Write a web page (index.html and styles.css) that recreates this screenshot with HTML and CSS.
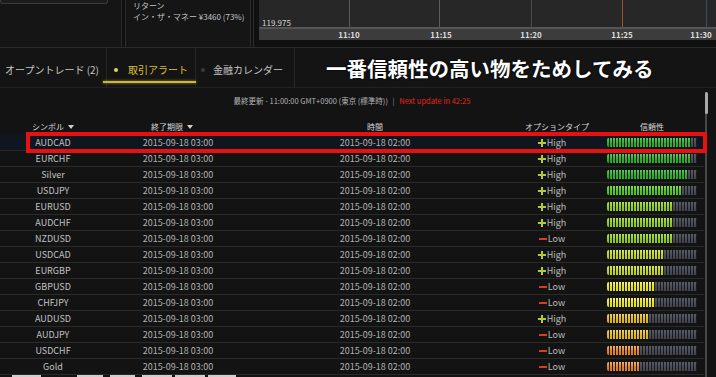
FILE: index.html
```html
<!DOCTYPE html>
<html lang="ja">
<head>
<meta charset="utf-8">
<title>取引アラート</title>
<link rel="stylesheet" href="styles.css">
</head>
<body>
<div class="page">
  <header class="top">
    <div class="acct"><div class="acct-box"></div></div>
    <div class="vsep"></div>
    <div class="info">
      <div class="info-line">リターン</div>
      <div class="info-line">イン・ザ・マネー ¥3460 (73%)</div>
    </div>
    <div class="vsep narrow"></div>
    <div class="chart-col">
      <div class="chart">
        <div class="plot">
          <span class="grid" style="left:90px"></span>
          <span class="grid" style="left:180px"></span>
          <span class="grid dim" style="left:272px"></span>
          <span class="grid orange" style="left:363px"></span>
          <span class="grid blue" style="left:447px"></span>
          <span class="price">119.975</span>
        </div>
        <div class="axis">
          <span class="tick" style="left:90px">11:10</span>
          <span class="tick" style="left:182px">11:15</span>
          <span class="tick" style="left:272px">11:20</span>
          <span class="tick" style="left:363px">11:25</span>
          <span class="tick" style="left:442px">11:30</span>
        </div>
      </div>
    </div>
  </header>

  <nav class="tabs">
    <div class="tab first">オープントレード (2)</div>
    <div class="tab active"><span class="dot"></span>取引アラート</div>
    <div class="tab third"><span class="dot"></span>金融カレンダー</div>
    <div class="headline">一番信頼性の高い物をためしてみる</div>
  </nav>

  <main class="content">
    <div class="list">
      <div class="stamp">最終更新 - 11:00:00 GMT+0900 (東京 (標準時)) <span class="pipe">|</span> <span class="next">Next update in 42:25</span></div>

      <div class="row head">
        <span class="sort">シンボル</span>
        <span class="sort h-date">終了期限</span>
        <span>時間</span>
        <span class="h-opt">オプションタイプ</span>
        <span>信頼性</span>
      </div>

      <div class="row sel"><span class="sym">AUDCAD</span><span class="dt">2015-09-18 03:00</span><span class="dt">2015-09-18 02:00</span><span class="opt"><i class="plus"></i>High</span><span class="bar c1"><span class="fill" style="--n:28"></span><span class="rest"></span></span></div>
      <div class="row"><span class="sym">EURCHF</span><span class="dt">2015-09-18 03:00</span><span class="dt">2015-09-18 02:00</span><span class="opt"><i class="plus"></i>High</span><span class="bar c1"><span class="fill" style="--n:28"></span><span class="rest"></span></span></div>
      <div class="row"><span class="sym">Silver</span><span class="dt">2015-09-18 03:00</span><span class="dt">2015-09-18 02:00</span><span class="opt"><i class="plus"></i>High</span><span class="bar c1"><span class="fill" style="--n:27"></span><span class="rest"></span></span></div>
      <div class="row"><span class="sym">USDJPY</span><span class="dt">2015-09-18 03:00</span><span class="dt">2015-09-18 02:00</span><span class="opt"><i class="plus"></i>High</span><span class="bar c2"><span class="fill" style="--n:25"></span><span class="rest"></span></span></div>
      <div class="row"><span class="sym">EURUSD</span><span class="dt">2015-09-18 03:00</span><span class="dt">2015-09-18 02:00</span><span class="opt"><i class="plus"></i>High</span><span class="bar c3"><span class="fill" style="--n:22"></span><span class="rest"></span></span></div>
      <div class="row"><span class="sym">AUDCHF</span><span class="dt">2015-09-18 03:00</span><span class="dt">2015-09-18 02:00</span><span class="opt"><i class="plus"></i>High</span><span class="bar c3"><span class="fill" style="--n:22"></span><span class="rest"></span></span></div>
      <div class="row"><span class="sym">NZDUSD</span><span class="dt">2015-09-18 03:00</span><span class="dt">2015-09-18 02:00</span><span class="opt"><i class="minus"></i>Low</span><span class="bar c3"><span class="fill" style="--n:22"></span><span class="rest"></span></span></div>
      <div class="row"><span class="sym">USDCAD</span><span class="dt">2015-09-18 03:00</span><span class="dt">2015-09-18 02:00</span><span class="opt"><i class="plus"></i>High</span><span class="bar c4"><span class="fill" style="--n:19"></span><span class="rest"></span></span></div>
      <div class="row"><span class="sym">EURGBP</span><span class="dt">2015-09-18 03:00</span><span class="dt">2015-09-18 02:00</span><span class="opt"><i class="plus"></i>High</span><span class="bar c4"><span class="fill" style="--n:19"></span><span class="rest"></span></span></div>
      <div class="row"><span class="sym">GBPUSD</span><span class="dt">2015-09-18 03:00</span><span class="dt">2015-09-18 02:00</span><span class="opt"><i class="minus"></i>Low</span><span class="bar c5"><span class="fill" style="--n:16"></span><span class="rest"></span></span></div>
      <div class="row"><span class="sym">CHFJPY</span><span class="dt">2015-09-18 03:00</span><span class="dt">2015-09-18 02:00</span><span class="opt"><i class="minus"></i>Low</span><span class="bar c5"><span class="fill" style="--n:16"></span><span class="rest"></span></span></div>
      <div class="row"><span class="sym">AUDUSD</span><span class="dt">2015-09-18 03:00</span><span class="dt">2015-09-18 02:00</span><span class="opt"><i class="plus"></i>High</span><span class="bar c6"><span class="fill" style="--n:14"></span><span class="rest"></span></span></div>
      <div class="row"><span class="sym">AUDJPY</span><span class="dt">2015-09-18 03:00</span><span class="dt">2015-09-18 02:00</span><span class="opt"><i class="minus"></i>Low</span><span class="bar c6"><span class="fill" style="--n:14"></span><span class="rest"></span></span></div>
      <div class="row"><span class="sym">USDCHF</span><span class="dt">2015-09-18 03:00</span><span class="dt">2015-09-18 02:00</span><span class="opt"><i class="minus"></i>Low</span><span class="bar c7"><span class="fill" style="--n:11"></span><span class="rest"></span></span></div>
      <div class="row"><span class="sym">Gold</span><span class="dt">2015-09-18 03:00</span><span class="dt">2015-09-18 02:00</span><span class="opt"><i class="minus"></i>Low</span><span class="bar c7"><span class="fill" style="--n:11"></span><span class="rest"></span></span></div>

      <div class="strip">
        <span class="blk w29"></span>
        <span class="blk w26 gap36"></span>
        <span class="blk w25"></span>
        <span class="blk w30"></span>
        <span class="blk w30 gap3"></span>
        <span class="blk w28 gap3"></span>
      </div>

      <div class="highlight"></div>
    </div>
    <div class="scroll"><div class="thumb"></div></div>
  </main>
</div>
</body>
</html>
```

FILE: styles.css
```css
* { box-sizing: border-box; margin: 0; padding: 0; }

html, body {
  width: 716px;
  height: 377px;
  overflow: hidden;
  background: #141414;
}

body {
  font-family: "Noto Sans CJK JP", "Noto Sans", sans-serif;
  color: #c8c8c8;
}

.page {
  width: 716px;
  height: 377px;
  display: flex;
  flex-direction: column;
}

/* ---------- top strip ---------- */
.top {
  flex: none;
  height: 48px;
  display: flex;
  background: #151515;
  border-bottom: 1px solid #2a2a2a;
}

.acct { width: 121px; }

.acct-box {
  width: 108px;
  height: 4px;
  background: #1d1d1d;
  border: 1px solid #3a3a3a;
  border-top: none;
  border-radius: 0 0 3px 3px;
}

.vsep {
  width: 5px;
  background: #101010;
  border-left: 1px solid #2c2c2c;
  border-right: 1px solid #2c2c2c;
}
.vsep.narrow { width: 4px; }

.info {
  width: 124px;
  padding-left: 7px;
  font-size: 8px;
  line-height: 11px;
  color: #c4c4c4;
}

.chart-col {
  flex: 1;
  padding-left: 5px;
  background: #101010;
}

.chart {
  height: 40px;
  background: #272727;
  display: flex;
  flex-direction: column;
}

.plot {
  position: relative;
  height: 27px;
}

.grid {
  position: absolute;
  top: 0;
  bottom: 0;
  width: 1px;
  background: #5a5a5a;
}
.grid.dim { background: #4a4a4a; }
.grid.orange { background: #9a5626; }
.grid.blue { background: #3c4a62; }

.price {
  position: absolute;
  left: 3px;
  bottom: 0;
  font-size: 8px;
  line-height: 8px;
  color: #d4d4d4;
}

.axis {
  position: relative;
  flex: 1;
  background: #3c3c3c;
  border-top: 2px solid #555;
}

.tick {
  position: absolute;
  top: 1px;
  transform: translateX(-50%);
  font-size: 8px;
  line-height: 10px;
  font-weight: 700;
  color: #dcdcdc;
}

/* ---------- tabs ---------- */
.tabs {
  flex: none;
  height: 40px;
  display: flex;
  background: #141414;
  border-bottom: 1px solid #222;
}

.tab {
  position: relative;
  display: flex;
  align-items: center;
  padding-top: 5px;
  font-size: 10px;
  line-height: 12px;
  color: #c4c4c4;
  border-right: 1px solid #262626;
}
.tab.first { padding-left: 5px; width: 107px; }
.tab.active { padding-left: 7px; width: 89px; color: #dcbf3a; }
.tab.third { padding-left: 5px; width: 99px; }

.dot {
  width: 4px;
  height: 4px;
  border-radius: 50%;
  background: #3a3a3a;
  margin-right: 9px;
}
.tab.active .dot { background: #d6dc4a; margin-right: 10px; }
.tab.third .dot { margin-right: 8px; }

.tab.active::after {
  content: "";
  position: absolute;
  left: -4px;
  right: -1px;
  bottom: 4px;
  height: 2px;
  background: #cdb83a;
  box-shadow: 0 0 3px rgba(220, 200, 70, 0.7);
}

.headline {
  margin-left: 31px;
  align-self: center;
  padding-top: 1px;
  font-size: 20.5px;
  line-height: 24px;
  font-weight: 700;
  color: #fff;
  text-shadow: 0 0 2px #000, 0 0 1px #000;
  white-space: nowrap;
}

/* ---------- content ---------- */
.content {
  flex: 1;
  display: flex;
  overflow: hidden;
  background: #131313;
}

.list {
  position: relative;
  width: 704px;
}

.stamp {
  height: 31px;
  padding-top: 9px;
  text-align: center;
  font-size: 7.5px;
  line-height: 8px;
  color: #b4b4b4;
  white-space: nowrap;
}
.pipe { color: #8a8a8a; margin: 0 3px; }
.next { color: #e8241e; }

.row {
  display: grid;
  grid-template-columns: 106px 144px 250px 104px 96px;
  height: 16px;
  align-items: center;
  justify-items: center;
  border-bottom: 1px solid #2a2a2a;
  font-size: 9px;
  line-height: 12px;
  white-space: nowrap;
}

.row.head {
  border-bottom: none;
  font-size: 8px;
  line-height: 10px;
  color: #d8d8d8;
}

.row.sel { background: #0f1620; }

.sort::after {
  content: "";
  display: inline-block;
  margin-left: 4px;
  vertical-align: 1px;
  border-left: 3px solid transparent;
  border-right: 3px solid transparent;
  border-top: 4px solid #d0d0d0;
}
.h-date { padding-right: 12px; }
.h-opt { padding-left: 10px; }

.sym { color: #c2c2c2; }
.dt { color: #b2b2b2; }

.opt {
  display: flex;
  align-items: center;
  color: #bdbdbd;
  font-size: 9px;
}

.plus, .minus {
  position: relative;
  display: inline-block;
  width: 8px;
  height: 8px;
  margin-right: 1px;
}
.plus::before, .plus::after,
.minus::before {
  content: "";
  position: absolute;
  background: #b7c93a;
}
.plus::before { left: 0; right: 0; top: 3px; height: 2px; }
.plus::after { top: 0; bottom: 0; left: 3px; width: 2px; }
.minus::before { left: 0; right: 0; top: 3px; height: 2px; background: #d2401f; }

/* reliability bar */
.bar {
  display: flex;
  width: 90px;
  height: 9px;
  border-radius: 2px;
  overflow: hidden;
  background: #1a1a1a;
  --c: #36b236;
  --hi: #5bd05b;
}
.bar .fill {
  width: calc(var(--n) * 3px);
  background:
    repeating-linear-gradient(90deg, transparent 0 2px, #1a1a1a 2px 3px),
    linear-gradient(var(--hi), var(--c) 60%);
}
.bar .rest {
  flex: 1;
  background:
    repeating-linear-gradient(90deg, transparent 0 2px, #1a1a1a 2px 3px),
    linear-gradient(#5a5e6a, #454852 70%);
}

.c1 { --c: #2faa2f; --hi: #58cc58; }
.c2 { --c: #4fc224; --hi: #7ee050; }
.c3 { --c: #8cc820; --hi: #b2e44c; }
.c4 { --c: #bccf22; --hi: #dcec56; }
.c5 { --c: #e2df1c; --hi: #f6f466; }
.c6 { --c: #dcb41e; --hi: #f2d65a; }
.c7 { --c: #e07e26; --hi: #f6b26a; }

.strip {
  display: flex;
  height: 2px;
  padding-left: 12px;
  gap: 7px;
}
.blk { height: 2px; background: #cfcfcf; }
.w25 { width: 25px; }
.w26 { width: 26px; }
.w28 { width: 28px; }
.w29 { width: 29px; }
.w30 { width: 30px; }
.gap36 { margin-left: 29px; }
.gap3 { margin-left: -4px; }

.highlight {
  position: absolute;
  left: 26px;
  top: 44px;
  width: 681px;
  height: 21px;
  border: 4px solid #e81010;
  z-index: 2;
}

.scroll {
  width: 12px;
  padding-top: 4px;
  padding-left: 1px;
  position: relative;
}
.scroll::before {
  content: "";
  position: absolute;
  left: 1px;
  top: 4px;
  bottom: 0;
  width: 2px;
  background: #474747;
}
.thumb {
  position: relative;
  width: 3px;
  height: 22px;
  border-radius: 2px;
  background: #a8a8a8;
}
```
